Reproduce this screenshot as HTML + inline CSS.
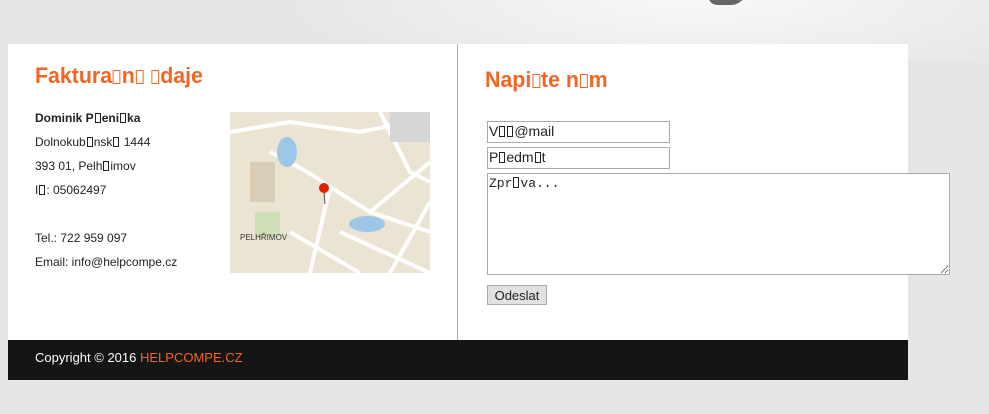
<!DOCTYPE html>
<html><head><meta charset="utf-8"><style>
*{margin:0;padding:0;box-sizing:border-box}
body{width:989px;height:414px;overflow:hidden;background:#e6e6e6;font-family:"Liberation Sans",Arial,sans-serif;position:relative}
.bg{position:absolute;left:0;top:0;width:989px;height:60px;background:radial-gradient(ellipse 420px 90px at 700px 0,#f8f8f8,#e6e6e6)}
.blob{position:absolute;left:708px;top:-10px;width:38px;height:15px;border-radius:0 0 22px 14px;background:#666}
.panel{position:absolute;left:8px;top:44px;width:900px;height:296px;background:#fff}
.div{position:absolute;left:457px;top:44px;width:1px;height:296px;background:#aaa}
h2{position:absolute;font-weight:bold;color:#f26522;font-size:22px;transform:scaleX(.97);transform-origin:0 0;white-space:nowrap}
.t{display:inline-block;width:6px;height:11px;border:1px solid currentColor;margin:0 1px;vertical-align:-1px}
h2 .t{width:8px;height:14px;border-width:1px}
.info{position:absolute;left:35px;top:106px;font-size:12px;color:#222;line-height:24px}
.info .t{width:6px;height:10px}
.map{position:absolute;left:230px;top:112px;width:200px;height:161px;background:#ece4d2;overflow:hidden}
input,textarea,button{position:absolute;font-size:14px;color:#222;border:1px solid #aaa;background:#fff}
.foot{position:absolute;left:8px;top:340px;width:900px;height:40px;background:#151515;color:#fff;font-size:13px;padding:10px 27px}
.foot span{color:#f26522}
</style></head><body>
<div class="bg"></div><div class="blob"></div>
<div class="panel"></div><div class="div"></div>
<h2 style="left:35px;top:63px">Faktura<span class="t"></span>n<span class="t"></span> <span class="t"></span>daje</h2>
<h2 style="left:485px;top:67px">Napi<span class="t"></span>te n<span class="t"></span>m</h2>
<div class="info">
<b>Dominik P<span class="t"></span>eni<span class="t"></span>ka</b><br>
Dolnokub<span class="t"></span>nsk<span class="t"></span> 1444<br>
393 01, Pelh<span class="t"></span>imov<br>
I<span class="t"></span>: 05062497<br><br>
Tel.: 722 959 097<br>
Email: info@helpcompe.cz
</div>
<div class="map"><svg width="200" height="161">
<g stroke="#fff" stroke-width="4" fill="none">
<path d="M0 20 L60 10 L130 20 L200 5"/><path d="M40 40 Q80 60 100 75 L140 100 L200 120"/>
<path d="M100 75 L80 161"/><path d="M140 100 L200 50"/><path d="M160 161 L200 90"/>
<path d="M60 120 L130 161"/><path d="M150 0 L180 60 L200 70"/><path d="M110 120 L200 161"/>
</g>
<rect x="160" y="0" width="40" height="30" fill="#d6d6d6"/>
<ellipse cx="57" cy="40" rx="10" ry="15" fill="#9ec6e6"/>
<ellipse cx="137" cy="112" rx="18" ry="8" fill="#9ec6e6"/>
<rect x="20" y="50" width="25" height="40" fill="#d9cdb8"/>
<rect x="25" y="100" width="25" height="25" fill="#cfe0b8"/>
<text x="10" y="128" font-size="8" font-family="Liberation Sans" fill="#333">PELHŘIMOV</text>
<circle cx="94" cy="76" r="5" fill="#d20"/><path d="M94 80 L95 92" stroke="#555"/>
</svg></div>
<input style="left:487px;top:121px;width:183px;height:22px">
<div style="position:absolute;left:489px;top:123px;font-size:14px;color:#222">V<span class="t"></span><span class="t"></span>@mail</div>
<input style="left:487px;top:147px;width:183px;height:22px">
<div style="position:absolute;left:489px;top:149px;font-size:14px;color:#222">P<span class="t"></span>edm<span class="t"></span>t</div>
<textarea style="left:487px;top:173px;width:463px;height:102px"></textarea>
<div style="position:absolute;left:489px;top:176px;font-size:13px;font-family:'Liberation Mono',monospace;color:#222">Zpr<span class="t"></span>va...</div>
<button style="left:487px;top:285px;width:60px;height:20px;background:#e1e1e1;font-size:13px">Odeslat</button>
<div class="foot">Copyright © 2016 <span>HELPCOMPE.CZ</span></div>
</body></html>
